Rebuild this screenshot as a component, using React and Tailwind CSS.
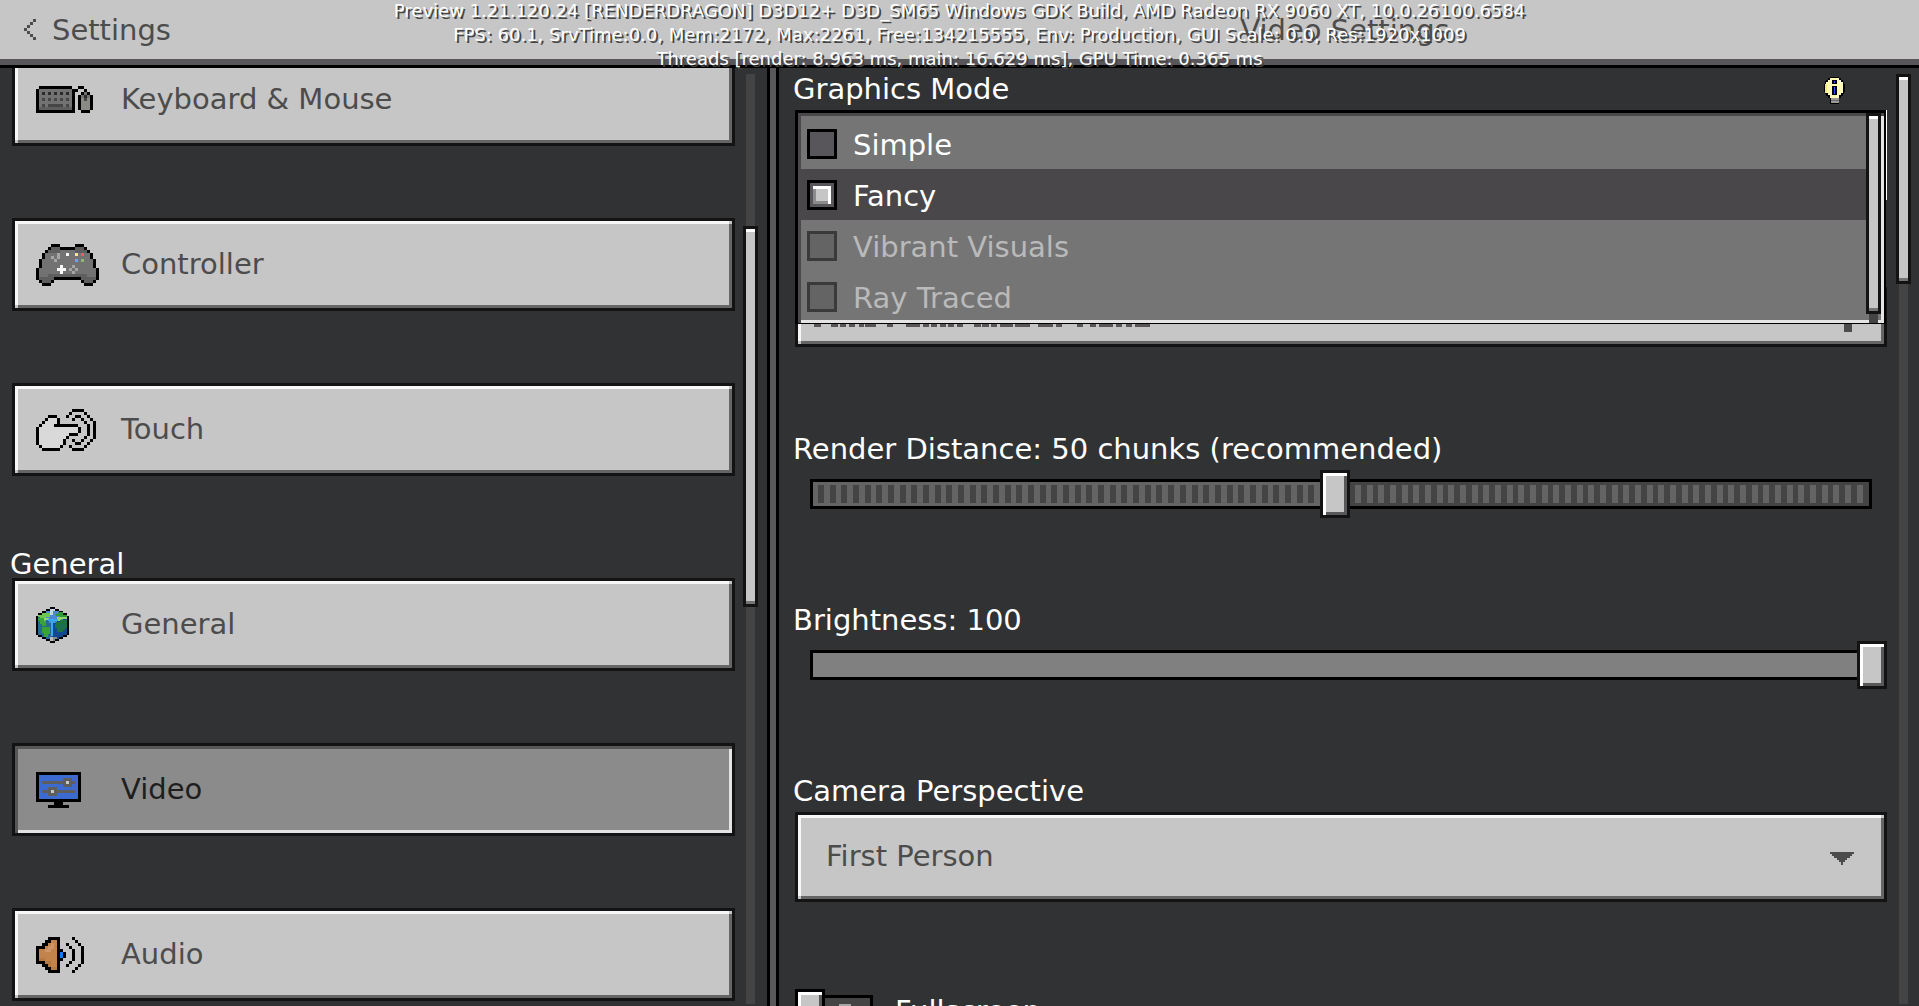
import React, { useState } from 'react';

const BUTTON =
  'relative border-[3px] border-[#131313] bg-[#c6c6c6] text-[#4c4c4c] shadow-[inset_3px_3px_0_#f7f7f7,inset_-3px_-3px_0_#656565] before:absolute before:top-0 before:right-0 before:size-[3px] before:bg-[#c6c6c6] after:absolute after:bottom-0 after:left-0 after:size-[3px] after:bg-[#c6c6c6]';

const BUTTON_ACTIVE =
  'relative border-[3px] border-[#131313] bg-[#8b8b8b] text-[#1e1e1e] shadow-[inset_3px_3px_0_#565656,inset_-3px_-3px_0_#e3e3e3]';

const LABEL = '-ml-[2px] block pt-[2px] leading-[34px]';

const RANGE =
  'absolute inset-0 m-0 h-[48px] w-full cursor-pointer appearance-none bg-transparent [&::-webkit-slider-thumb]:h-[48px] [&::-webkit-slider-thumb]:w-[30px] [&::-webkit-slider-thumb]:appearance-none [&::-webkit-slider-thumb]:border-[3px] [&::-webkit-slider-thumb]:border-solid [&::-webkit-slider-thumb]:border-[#131313] [&::-webkit-slider-thumb]:bg-[#c6c6c6] [&::-webkit-slider-thumb]:shadow-[inset_3px_3px_0_#ffffff,inset_-3px_-3px_0_#58585a]';

const PALETTE = {
  k: '#000000',
  g: '#727272',
  h: '#5e5e5e',
  d: '#2b2b2b',
  e: '#464646',
  l: '#a5a5a5',
  m: '#8b8b86',
  w: '#f7f7f7',
  s: '#d9d9d9',
  y: '#f5e97c',
  r: '#ee5a6e',
  b: '#54b1e8',
  n: '#8cb86f',
  v: '#3b6bd0',
  c: '#c6c6c6',
  o: '#c3844c',
  p: '#cf9468',
  q: '#b57a42',
  u: '#0f7bff',
};

const ICONS = {
  keyboard: [
    '.kkkkkkkkkkk..kk...',
    'kgggggggggggkk..k..',
    'kgdgdgdgdgdgk..kgk.',
    'kgggggggggggk.kgdgk',
    'kgegegegegegk.kmemk',
    'kgggggggggggk.kmmmk',
    'kgegeeeeegegk.kmmmk',
    'khhhhhhhhhhhk.kmmmk',
    'kkkkkkkkkkkkk..kkk.',
  ],
  controller: [
    '.....kkk.....kkk.....',
    '....khhhkkkkkhhhk....',
    '...khhhhggggghhhhk...',
    '..kgggglggwggygrggk..',
    '..kgglglggggggggggk..',
    '.kgggglggggggbgngggk.',
    '.kgggggggggggggggggk.',
    '.kggggggwggglggggggk.',
    'kggggggwwwglglggggggk',
    'kgggggggwggglgggggggk',
    'kggghhhhhhhhhhhhhgggk',
    'khhhhhkkkkkkkkkhhhhhk',
    '.khhhk.........khhhk.',
    '..kkk...........kkk..',
  ],
  touch: [
    '............kkkk....',
    '...........k....k...',
    '....kkk...k..kk..k..',
    '...ksssk....k..k..k.',
    '..kssssk........k..k',
    '.ksssskkkkkkkk...k.k',
    'ksssssssssssssk..k.k',
    'ksssssssssssssk..k.k',
    'ksssssssssskkk...k.k',
    'ksssssssssk.....k..k',
    'kssssssssk..k..k..k.',
    'kssssssssk...kk..k..',
    '.kssssssk..k....k...',
    '..kkkkkk....kkkk....',
  ],
  video: [
    'kkkkkkkkkkkkkkk',
    'kvvvvvvvvvvvvvk',
    'kvvvvvvvvhhhvvk',
    'kvhhhhhhhhchhvk',
    'kvvvvvvvvhhhvvk',
    'kvvvhhhvvvvvvvk',
    'kvhhhchhhhhhhvk',
    'kvvvhhhvvvvvvvk',
    'kvvvvvvvvvvvvvk',
    'kkkkkkkkkkkkkkk',
    '......kkk......',
    '....kkkkkkk....',
  ],
  audio: [
    '....kkkk....k...',
    '...kkook.....k..',
    '..kkopok..k...k.',
    'kkkoppok...k...k',
    'kooppookk...k..k',
    'kooooookuk..k..k',
    'kooooookuk..k..k',
    'kqqooookk...k..k',
    'kkkqqook...k...k',
    '..kkqook..k...k.',
    '...kkqqk.....k..',
    '....kkkk....k...',
  ],
};

const PixelIcon = ({ name }) => {
  const rows = ICONS[name];
  const cols = rows[0].length;
  return (
    <svg width={cols * 3} height={rows.length * 3} viewBox={`0 0 ${cols} ${rows.length}`} shapeRendering="crispEdges" aria-hidden="true">
      {rows.map((row, y) =>
        row.split('').map((c, x) =>
          c === '.' ? null : <rect key={`${x}-${y}`} x={x} y={y} width="1" height="1" fill={PALETTE[c]} />
        )
      )}
    </svg>
  );
};

const GlobeIcon = () => (
  <svg width="33" height="36" viewBox="0 0 33 36" shapeRendering="crispEdges" aria-hidden="true">
    <path fill="#000" d="M14 0h5v2h4v2h4v2h4v3h2v19h-2v2h-4v2h-4v2h-4v2h-5v-2h-4v-2H6v-2H2v-2H0V9h2V6h4V4h4V2h4z" />
    <path fill="#256a97" d="M2 9h14v25h-2v-2h-4v-2H6v-2H2z" />
    <path fill="#12488f" d="M16 9h15v19h-4v2h-4v2h-4v2h-3z" />
    <path fill="#4b86d8" d="M14 2h5v2h4v2h4v2h4v2h-4v3h-6v3h-8v-3H7v-3H2V8h4V6h4V4h4z" />
    <path fill="#6cc64f" d="M6 6h8v4h-4v4H4v-4H2V8h4z" />
    <path fill="#2f9a35" d="M22 5h5v3h4v3h-7V9h-4V7h2z" />
    <path fill="#8ed46a" d="M8 11h5v2H8zM21 10h10v2h-6v2h-4z" />
    <path fill="#c3d9df" d="M14 2h5v2h-2v4h-3z" />
    <path fill="#39a9ee" d="M12 12h10v2h-4v2h-3v-2h-3z" />
    <path fill="#39a339" d="M2 11h6v3h2v5H6v-2H4v-3H2zM6 20h8v7h-2v3H8v-4H6z" />
    <path fill="#1d7149" d="M20 15h4v-2h7v8h-2v2h-2v2h-6v-4h-2v-4h1z" />
    <path fill="#39a9ee" d="M15 16h2v13h-2z" />
    <path fill="#bdbdbd" d="M14 30h3v4h-3z" />
    <path fill="#8a8a8a" d="M17 30h4v2h-2v2h-2z" />
  </svg>
);

const BulbIcon = () => (
  <svg width="21" height="27" viewBox="0 0 21 27" shapeRendering="crispEdges" aria-hidden="true">
    <path fill="#000" d="M6 0h9v1h2v2h2v2h1v2h1v8h-1v2h-1v2h-2v2h-2v6H6v-6H4v-2H2v-2H1v-2H0V7h1V4h1V3h2V1h2z" />
    <path fill="#fffab4" d="M6 1h9v2h2v2h2v11h-2v2h-2v3H6v-3H4v-2H1V7h1V5h2V3h2z" />
    <path fill="#f3e882" d="M1 7h2v9H1z" />
    <path fill="#fff" d="M15 4h2v2h-2z" />
    <path fill="#9a9a9a" d="M7 21h8v5H7z" />
    <path fill="#6b6b6b" d="M7 23h8v1H7z" />
    <path fill="#000" d="M8 3h5v4H8zM8 9h5v9H8z" />
    <path fill="#2f55ff" d="M10 4h1v2h-1zM10 10h1v7h-1z" />
  </svg>
);

const NavButton = ({ label, icon, active }) => (
  <button className={`flex h-[93px] w-full shrink-0 items-center pl-[21px] text-left ${active ? BUTTON_ACTIVE : BUTTON}`}>
    <span className="w-[85px] shrink-0">{icon}</span>
    <span className="pb-[2px]">{label}</span>
  </button>
);

const Scrollbar = ({ track, thumb }) => (
  <div className={`relative mt-[6px] mb-[2px] flex w-[15px] shrink-0 flex-col bg-[linear-gradient(#444444,#444444)] bg-[length:9px_100%] bg-center bg-no-repeat ${track}`}>
    <div className={`w-[15px] border-[3px] border-[#131313] bg-[#c6c6c6] shadow-[inset_0_3px_0_#ffffff,inset_0_-3px_0_#747474] ${thumb}`} />
  </div>
);

const NOTCHES = Array.from({ length: 90 });
const MIN_CHUNKS = 5;
const MAX_CHUNKS = 96;

const ChunkSlider = ({ value, onChange }) => (
  <div className="relative mt-1 h-[48px]">
    <div className="relative mx-[15px] flex h-full items-center">
      <div className="flex h-[30px] w-full items-center justify-between border-[3px] border-black bg-[#444444] px-[5px]">
        {NOTCHES.map((_, i) => (
          <span key={i} className="h-[18px] w-[6px] bg-[#646464]" />
        ))}
      </div>
      {/* filled part: the same notches in reverse colours, cut off at the thumb */}
      <div
        className="absolute left-0 h-[30px] overflow-hidden"
        style={{ width: `${((value - MIN_CHUNKS) / (MAX_CHUNKS - MIN_CHUNKS)) * 100}%` }}
      >
        <div
          className="flex h-[30px] items-center justify-between border-[3px] border-black bg-[#646464] px-[5px]"
          style={{ width: `${((MAX_CHUNKS - MIN_CHUNKS) / Math.max(value - MIN_CHUNKS, 1)) * 100}%` }}
        >
          {NOTCHES.map((_, i) => (
            <span key={i} className="h-[18px] w-[6px] bg-[#444444]" />
          ))}
        </div>
      </div>
    </div>
    <input id="render-distance" type="range" min={MIN_CHUNKS} max={MAX_CHUNKS} value={value} onChange={onChange} className={RANGE} />
  </div>
);

const MODES = [
  { id: 'simple', label: 'Simple' },
  { id: 'fancy', label: 'Fancy' },
  { id: 'vibrant', label: 'Vibrant Visuals', disabled: true },
  { id: 'raytraced', label: 'Ray Traced', disabled: true },
];

const ModeList = ({ mode, setMode }) => (
  <div className="absolute top-0 right-px left-0 flex h-[214px] border-t-[3px] border-r-2 border-b border-l-[3px] border-black bg-[#757575] shadow-[inset_3px_3px_0_#4b484b,inset_-3px_-3px_0_#e5e5e5]">
    <div role="radiogroup" aria-label="Graphics Mode" className="mt-[5px] ml-[3px] flex flex-1 flex-col">
      {MODES.map((m) => (
        <label
          key={m.id}
          className={`flex h-[51px] items-start gap-4 pt-[11px] pl-[6px] leading-[30px] ${m.disabled ? 'text-[#bababa]' : 'text-white'} ${mode === m.id ? 'bg-[#4a474a]' : ''}`}
        >
          <input
            type="radio"
            name="graphics-mode"
            checked={mode === m.id}
            disabled={m.disabled}
            onChange={() => setMode(m.id)}
            className="size-[30px] appearance-none border-[3px] border-black bg-[#58565a] checked:bg-[#c6c6c6] checked:shadow-[inset_0_0_0_3px_#58565a,inset_-3px_3px_0_3px_#ffffff,inset_3px_-3px_0_3px_#8b8b8b] disabled:border-[#3a3a3a] disabled:bg-[#646464]"
          />
          <span className="pt-px">{m.label}</span>
        </label>
      ))}
    </div>
    <div className="h-[210px] w-[15px] bg-[linear-gradient(#444444,#444444)] bg-[length:9px_100%] bg-center bg-no-repeat">
      <div className="h-[201px] border-[3px] border-[#131313] bg-[#c6c6c6] shadow-[inset_0_3px_0_#ffffff,inset_0_-3px_0_#747474]" />
    </div>
    <div className="w-[3px]" />
  </div>
);

// Lower edge of the row that the open list covers: [x, width]
const COVERED = [
  [0, 7], [17, 7], [26, 6], [35, 6], [45, 5], [51, 11], [73, 6], [92, 14], [109, 6], [117, 6], [126, 6],
  [134, 6], [143, 6], [160, 7], [168, 7], [177, 6], [186, 13], [201, 15], [224, 15], [242, 6], [263, 6],
  [276, 6], [285, 14], [302, 6], [312, 6], [321, 15],
];

const DEBUG_LINES = [
  'Preview 1.21.120.24 [RENDERDRAGON] D3D12+ D3D_SM65 Windows GDK Build, AMD Radeon RX 9060 XT, 10.0.26100.6584',
  'FPS: 60.1, SrvTime:0.0, Mem:2172, Max:2261, Free:134215555, Env: Production, GUI Scale: 0.0, Res:1920x1009',
  'Threads [render: 8.963 ms, main: 16.629 ms], GPU Time: 0.365 ms',
];

const App = () => {
  const [mode, setMode] = useState('fancy');
  const [chunks, setChunks] = useState(50);
  const [brightness, setBrightness] = useState(100);

  return (
    <div className="relative flex h-screen flex-col overflow-hidden bg-[#313233] font-['DejaVu_Sans',sans-serif] text-[29px] leading-[36px] whitespace-nowrap text-white">
      <header className="relative z-10 grid h-[68px] shrink-0 grid-cols-[779fr_1140fr] items-center border-b-[3px] border-black bg-[#c6c6c6] pb-[6px] text-[#4c4c4c] shadow-[inset_0_-6px_0_#58565a]">
        <button className="flex items-center gap-4 pl-6 text-left">
          <svg width="12" height="21" viewBox="0 0 4 7" fill="#4c4c4c" shapeRendering="crispEdges" aria-hidden="true">
            <path d="M3 0h1v1H3zM2 1h1v1H2zM1 2h1v1H1zM0 3h1v1H0zM1 4h1v1H1zM2 5h1v1H2zM3 6h1v1H3z" />
          </svg>
          Settings
        </button>
        <h1 className="pr-2 text-center">Video Settings</h1>
      </header>

      <div className="pointer-events-none absolute inset-x-0 -top-px z-20 text-center text-[18px] leading-[24px] text-white [text-shadow:2px_2px_0_#444444]">
        {DEBUG_LINES.map((line) => (
          <p key={line}>{line}</p>
        ))}
      </div>

      <main className="grid min-h-0 flex-1 grid-cols-[767fr_12px_1140fr]">
        <nav className="flex min-h-0 overflow-hidden pr-[9px] pl-3">
          <div className="-mt-[15px] mr-2 flex flex-1 flex-col gap-[72px]">
            <NavButton label="Keyboard & Mouse" icon={<PixelIcon name="keyboard" />} />
            <NavButton label="Controller" icon={<PixelIcon name="controller" />} />
            <NavButton label="Touch" icon={<PixelIcon name="touch" />} />
            <section className="flex flex-col gap-[72px]">
              <div>
                <h2 className="-ml-[2px] pt-[2px] leading-[28px]">General</h2>
                <NavButton label="General" icon={<GlobeIcon />} />
              </div>
              <NavButton label="Video" icon={<PixelIcon name="video" />} active />
              <NavButton label="Audio" icon={<PixelIcon name="audio" />} />
            </section>
          </div>
          <Scrollbar track="pt-[152px]" thumb="h-[49%]" />
        </nav>

        <div className="border-x-[3px] border-black bg-[#58585a]" />

        <div className="flex min-h-0 overflow-hidden pr-2 pl-4">
          <div className="mt-[2px] mr-[9px] flex min-w-0 flex-1 flex-col gap-[83px]">
            <section>
              <div className="flex items-center justify-between pr-[42px]">
                <h2 className={LABEL}>Graphics Mode</h2>
                <button aria-label="Graphics mode information" className="pt-1">
                  <BulbIcon />
                </button>
              </div>
              <div className="relative mt-1 flex h-[237px] flex-col justify-between">
                <div className="h-[90px] border-[3px] border-white bg-[#c6c6c6]" />
                <div className={`h-[60px] ${BUTTON}`}>
                  <svg width="336" height="3" className="absolute top-[34px] left-[16px]" fill="#5a5657" shapeRendering="crispEdges" aria-hidden="true">
                    {COVERED.map(([x, w]) => (
                      <rect key={x} x={x} y="0" width={w} height="3" />
                    ))}
                  </svg>
                  <span className="absolute top-[34px] right-[32px] size-2 bg-[#4c4c4c]" />
                </div>
                <ModeList mode={mode} setMode={setMode} />
              </div>
            </section>

            <section>
              <label htmlFor="render-distance" className={LABEL}>
                Render Distance: {chunks} chunks (recommended)
              </label>
              <ChunkSlider value={chunks} onChange={(e) => setChunks(Number(e.target.value))} />
            </section>

            <section>
              <label htmlFor="brightness" className={LABEL}>
                Brightness: {brightness}
              </label>
              <div className="relative mt-1 flex h-[48px] items-center px-[15px]">
                <div className="h-[30px] w-full border-[3px] border-black bg-[#808080]" />
                <input
                  id="brightness"
                  type="range"
                  min="0"
                  max="100"
                  value={brightness}
                  onChange={(e) => setBrightness(Number(e.target.value))}
                  className={RANGE}
                />
              </div>
            </section>

            <section>
              <label htmlFor="camera" className={LABEL}>
                Camera Perspective
              </label>
              <div className={`mt-1 h-[90px] ${BUTTON}`}>
                <select id="camera" className="h-full w-full appearance-none bg-transparent pb-[2px] pl-7">
                  <option>First Person</option>
                  <option>Third Person Back</option>
                  <option>Third Person Front</option>
                </select>
                <svg width="24" height="13" viewBox="0 0 24 13" fill="#4c4c4c" shapeRendering="crispEdges" className="pointer-events-none absolute top-[37px] right-[30px]" aria-hidden="true">
                  <path d="M0 0h24v2h-2v2h-2v2h-3v2h-2v2h-2v3h-2v-3H9V8H7V6H4V4H2V2H0z" />
                </svg>
              </div>
            </section>

            <label className="flex h-[50px] shrink-0 items-center">
              <input type="checkbox" className="sr-only" />
              <span className="h-[42px] w-[30px] border-[3px] border-black bg-[#c6c6c6] shadow-[inset_3px_3px_0_#ffffff,inset_-3px_-3px_0_#58585a]" />
              <span className="flex h-[30px] w-[48px] items-start justify-center border-y-[3px] border-r-[3px] border-black bg-[#444444] pt-[6px] pr-[6px]">
                <span className="size-[12px] border-[3px] border-[#a5a5a5]" />
              </span>
              <span className="pt-[2px] pl-[22px]">Fullscreen</span>
            </label>
          </div>
          <Scrollbar track="" thumb="h-[210px]" />
        </div>
      </main>
    </div>
  );
};

export default App;
